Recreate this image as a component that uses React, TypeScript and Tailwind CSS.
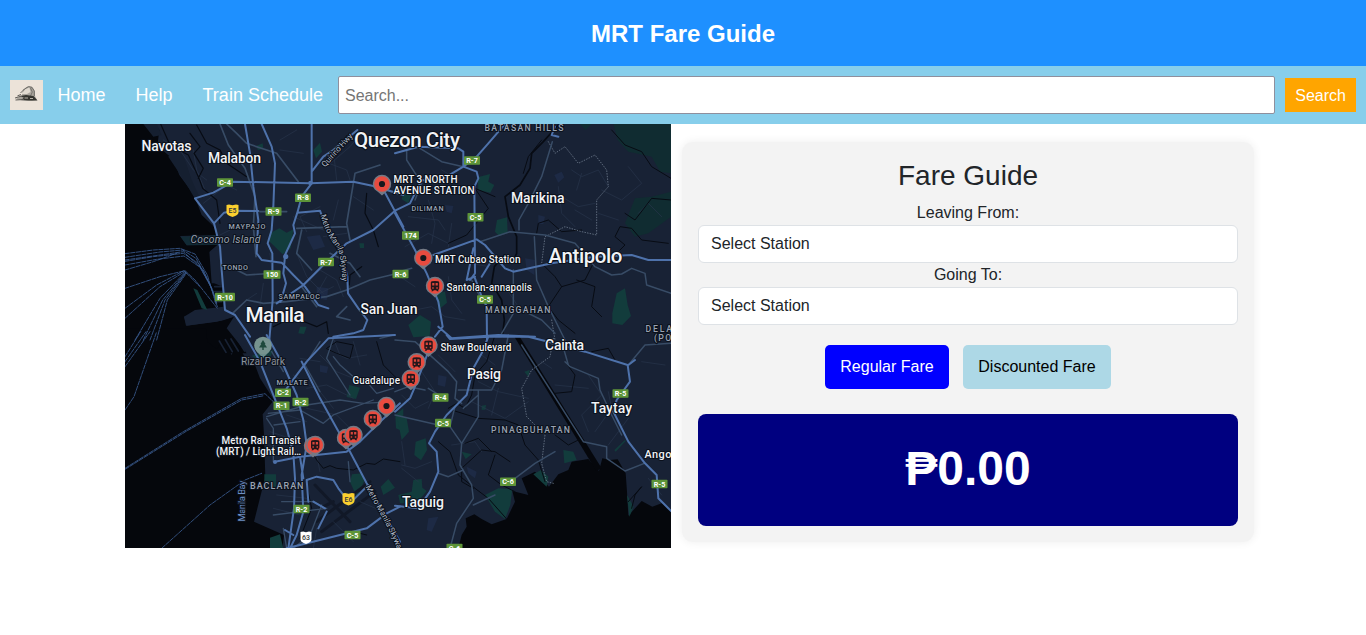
import React from 'react';

type Label = { t: string; x: number; y: number; w: number; s: number; c?: string; weight?: number; italic?: boolean; rot?: number };

const BRIGHT = '#f1f3f6';
const DIM = '#9aa3b2';

const labels: Label[] = [
  { t: 'Navotas', x: 141.5, y: 151.3, w: 50, s: 14 },
  { t: 'Malabon', x: 208, y: 163.2, w: 53, s: 14 },
  { t: 'Quezon City', x: 354, y: 147.3, w: 106, s: 20.5 },
  { t: 'Marikina', x: 511, y: 203, w: 53.5, s: 14 },
  { t: 'Antipolo', x: 548.5, y: 263, w: 74, s: 20.5 },
  { t: 'Manila', x: 245.5, y: 322, w: 59, s: 20.8 },
  { t: 'San Juan', x: 360.5, y: 314, w: 57, s: 14 },
  { t: 'Cainta', x: 545, y: 350, w: 39, s: 14 },
  { t: 'Pasig', x: 467, y: 379, w: 34, s: 14 },
  { t: 'Taytay', x: 591, y: 413, w: 41, s: 14 },
  { t: 'Taguig', x: 402, y: 507, w: 42, s: 14 },
  { t: 'Angono', x: 644.5, y: 458, w: 40, s: 11 },
  { t: 'MRT 3 NORTH', x: 393.5, y: 183.2, w: 64, s: 10 },
  { t: 'AVENUE STATION', x: 393.5, y: 194, w: 81, s: 10 },
  { t: 'MRT Cubao Station', x: 435, y: 263.2, w: 85.5, s: 10 },
  { t: 'Santolan-annapolis', x: 446.5, y: 290.8, w: 85.5, s: 10 },
  { t: 'Shaw Boulevard', x: 440.5, y: 350.5, w: 71, s: 10 },
  { t: 'Guadalupe', x: 352.5, y: 383.5, w: 47.5, s: 10 },
  { t: 'Metro Rail Transit', x: 221.5, y: 444, w: 79, s: 10 },
  { t: '(MRT) / Light Rail…', x: 216, y: 455, w: 85, s: 10 },
  { t: 'BATASAN HILLS', x: 484.5, y: 131, w: 79, s: 8.7, c: DIM },
  { t: 'DILIMAN', x: 411.5, y: 211, w: 32, s: 7.2, c: DIM },
  { t: 'MAYPAJO', x: 228.5, y: 229, w: 37, s: 7.2, c: DIM },
  { t: 'TONDO', x: 222.5, y: 269.5, w: 25.5, s: 7.2, c: DIM },
  { t: 'SAMPALOC', x: 278.5, y: 299.3, w: 41.5, s: 7.2, c: DIM },
  { t: 'MANGGAHAN', x: 485, y: 313, w: 65.5, s: 8.7, c: DIM },
  { t: 'DELA PAZ', x: 645.5, y: 331.5, w: 52, s: 8.7, c: DIM },
  { t: '(POB.)', x: 654, y: 341, w: 32, s: 8.7, c: DIM },
  { t: 'MALATE', x: 276.5, y: 384.7, w: 31, s: 7.2, c: DIM },
  { t: 'PINAGBUHATAN', x: 491, y: 432.7, w: 79, s: 8.7, c: DIM },
  { t: 'BACLARAN', x: 250, y: 489, w: 53.5, s: 9, c: DIM },
  { t: 'Cocomo Island', x: 190.5, y: 242.7, w: 70, s: 10.5, c: '#98a1ae', weight: 400, italic: true },
  { t: 'Rizal Park', x: 241, y: 365.3, w: 44, s: 10.5, c: '#8b929c', weight: 400 },
  { t: 'Manila Bay', x: 245, y: 521.5, w: 41, s: 9.5, c: '#6f8fc4', weight: 400, rot: -90 },
  { t: 'Quirino Hwy', x: 325, y: 167.5, w: 42, s: 8.2, c: '#b4bdca', weight: 400, rot: -48 },
];

const shields: [string, number, number, number][] = [
  ['C-4', 225, 182.5, 16], ['R-9', 273.5, 211.5, 16], ['R-8', 303, 197.7, 16], ['R-7', 326, 262, 16],
  ['150', 272, 274.5, 17], ['R-10', 225, 297, 20], ['R-7', 472, 160.5, 16], ['C-5', 475.5, 217.3, 16],
  ['174', 410.5, 235.5, 17], ['R-6', 400.5, 274, 16], ['C-5', 485, 299.5, 16], ['C-2', 283, 392.7, 16],
  ['R-1', 281.5, 405.7, 16], ['R-2', 300.5, 402, 16], ['R-2', 301.5, 509, 16], ['C-5', 352.5, 535, 16],
  ['R-4', 440.5, 397.5, 16], ['C-5', 443, 423, 16], ['R-5', 620.5, 393.5, 16], ['R-5', 659.5, 484, 16],
  ['C-6', 508, 481.8, 16], ['C-6', 454.5, 548, 16],
];

const pins: [number, number, 'dot' | 'train'][] = [
  [382, 184, 'dot'], [423.3, 258, 'dot'], [435, 286, 'train'], [428.5, 345.5, 'train'], [416.7, 362.3, 'train'],
  [410.8, 378.8, 'train'], [386.5, 406, 'dot'], [372.8, 419, 'train'], [346, 438, 'train'], [353.5, 435, 'train'],
  [313, 446, 'dot'], [315.2, 445, 'train'],
];

function Pin({ x, y, kind }: { x: number; y: number; kind: 'dot' | 'train' }) {
  return (
    <g transform={`translate(${x} ${y})`}>
      <path d="M-7.2 5.6 A9.2 9.2 0 1 1 7.2 5.6 Q3.5 8.2 0 11.5 Q-3.5 8.2 -7.2 5.6Z" fill="#747985" />
      <circle r="7.8" fill="#e84b3f" />
      {kind === 'dot' ? (
        <circle r="3.1" fill="#16181d" />
      ) : (
        <g fill="#24161a">
          <path d="M-4.2 -3.6 Q-4.2 -5 0 -5 Q4.2 -5 4.2 -3.6 V2.6 Q4.2 4 2.9 4 L3.8 5.2 H2 L1.2 4.2 H-1.2 L-2 5.2 H-3.8 L-2.9 4 Q-4.2 4 -4.2 2.6Z" />
          <path d="M-2.8 -3 H-.6 V-.6 H-2.8Z M.6 -3 H2.8 V-.6 H.6Z M-2.8 1.3 H-1.3 V2.7 H-2.8Z M1.3 1.3 H2.8 V2.7 H1.3Z" fill="#d8463b" />
        </g>
      )}
    </g>
  );
}

/* Each map tile is drafted at three units per pixel. */
const NW = 'translate(120 120) scale(.33333)';
const NE = 'translate(395 120) scale(.33333)';
const SW = 'translate(120 335) scale(.33333)';
const SE = 'translate(395 335) scale(.33333)';

function StationMap() {
  return (
    <svg viewBox="125 124 546 424" className="block h-[424px] w-[546px] shrink-0" fill="none" strokeLinejoin="round" strokeLinecap="round">
      <rect x="125" y="124" width="546" height="424" fill="#182235" />

      {/* water */}
      <g fill="#05070c">
        <path transform={NW} d="M0 0H95L118 30L112 78L160 118L178 165L222 225L245 285L280 318L294 345L180 348L200 376L292 375L270 394L283 490L308 500L310 568L250 578L192 590L198 617L305 602L342 590L320 625L380 700H0Z" />
        <path transform={SW} d="M0 -20H258L262 20L290 42L310 15L335 60L350 22L372 62L398 72L420 130L462 195L428 238L432 300L436 425L402 560L492 600L485 660H0Z" />
        <path transform={SE} d="M185 660L200 600L215 575L212 550L238 538L260 552L290 568L335 552L360 500L352 468L400 480L380 430L420 410L462 455L490 418L520 405L530 380L580 372L612 408L622 370L645 375L668 373L692 415L696 470L700 542L740 498L772 515L800 505L840 530V660Z" />
        <path transform={SE} d="M358 5L374 5L620 400L604 408Z" />
      </g>
      <path transform={NW} fill="#151f30" d="M70 12L100 50L125 45L110 12ZM145 110L158 85L190 105L215 180L240 235L222 232L195 185Z" />
      <path transform={NW} fill="#182235" d="M268 395L295 390L300 490L275 490ZM225 570L310 560L340 590L290 605L200 617L192 590Z" />
      <path transform={NW} fill="#112a35" d="M182 350L295 346L298 374L200 376Z" />
      <g stroke="#182235" strokeWidth="5">
        <path transform={SW} d="M298 18L318 52M316 14L337 50M333 12L355 48M350 10L374 48" />
        <path transform={NW} d="M284 500H305M284 515H305M284 530H305M284 545H305" />
      </g>

      {/* parks */}
      <g fill="#123c3c">
        <path transform={NW} d="M450 340L478 325L500 338L520 328L512 385L488 403L446 362ZM580 90L600 68L606 95L588 115ZM408 78L428 70L430 86L414 90ZM718 370L732 370L732 384L720 384ZM220 505L232 510L262 570L245 565ZM540 620L560 620L552 642L535 640Z" />
        <path transform={NE} d="M248 172L285 162L280 185L298 195L286 218L250 210ZM306 300L336 292L338 340L312 348L300 335ZM25 215L48 225L40 250L20 238ZM652 580L665 520L690 505L698 555L708 588L682 615L652 610ZM40 615L75 585L108 605L104 648L55 652ZM125 520L150 515L156 548L130 570Z" />
        <path transform={SW} d="M688 150L720 158L708 192L680 186ZM696 418L728 415L732 440L710 485L690 440ZM782 455L805 432L825 458L790 480ZM450 608L480 598L490 640H450ZM433 418H468V455H433ZM395 62L460 45L450 68L405 70ZM826 240L850 220V290L828 280Z" />
        <path transform={SE} d="M62 320L92 310L96 345L78 376L58 360ZM10 480L50 470L55 435L80 432L82 458L95 468L65 505L15 505ZM270 480L310 460L352 462L346 510L330 552L300 530ZM415 418L438 405L460 425L455 455ZM505 345L535 350L545 375L508 385ZM200 350L230 358L212 372ZM388 110L404 105L400 125ZM696 480L716 515L703 545ZM260 212L273 210L271 224L260 224ZM658 345L690 315L692 318L662 350ZM5 240L35 250L42 290L20 315Z" />
      </g>
      <path transform={NE} fill="#102c31" d="M655 12H828V160L795 155L770 110L700 95L668 60ZM720 235L770 230L828 215V290L760 340L720 350L690 310ZM555 12L590 12L572 30Z" />
      <g fill="#1d2a45">
        <path transform={NE} d="M478 165L500 155L508 172L490 188ZM150 255L175 258L170 280L155 275ZM430 285L450 290L445 312L430 312ZM390 415L420 420L418 465L395 450Z" />
        <path transform={SE} d="M130 120L155 125L150 155L128 150ZM100 550L130 545L110 590L95 585ZM215 395L245 410L240 430L220 415Z" />
        <path transform={NW} d="M560 350L600 345L615 380L580 390ZM590 500L625 505L620 540L590 535Z" />
        <path transform={SW} d="M600 90L625 95L620 115L600 110Z" />
      </g>

      {/* airport */}
      <g stroke="#111827" strokeWidth="9">
        <path transform={SW} d="M590 560L750 440M605 590L765 470M585 450L690 560M600 520L640 500" />
      </g>

      {/* local streets */}
      <g stroke="#27354b" strokeWidth="2">
        <path transform={NW} d="M130 60L180 90L220 150L260 180M220 90L230 150L255 210M250 250L320 195L350 210M340 300L330 330L300 345M395 310L440 320M520 290L610 330M560 335L540 290L600 260M610 350L680 340M600 120L680 150L690 180M640 90L650 180M720 45L690 80L620 140M530 400L560 470L610 520M550 500L600 450L650 480L670 530M580 540L620 470M500 520L560 540L640 500M430 490L420 560M380 540L410 520M450 400L455 450M700 230L760 270M640 300L655 240M530 30L480 60M480 90L550 100" />
        <path transform={NE} d="M40 290L130 300L150 330M30 380L100 340L160 370M60 255L130 270M140 150L190 180M100 240L120 310L110 370M170 310L160 380M180 420L230 430L280 440M500 230L550 260L600 250M490 200L500 280L540 320M530 150L560 170L610 150L640 200M540 270L590 300M560 160L545 210M620 210L680 240L740 190L700 140M730 280L760 250L800 290M610 280L670 300M160 470L170 540L200 580M60 570L110 560L150 590L210 600M0 460L60 500M330 500L370 560" />
        <path transform={SW} d="M620 40L680 70L740 60M600 60L650 110L700 130M640 10L660 60M700 20L720 90M520 120L600 170L640 220M560 160L620 150L700 190M560 220L650 240L700 290M500 240L560 260M450 290L540 320M590 360L600 410M470 480L560 490M460 520L540 540M590 580L580 640M640 560L700 620M720 500L790 530M430 60L500 110M540 70L600 80" />
        <path transform={SE} d="M60 80L120 170L100 220M20 180L60 220L100 200M20 390L60 400L110 380M20 320L30 390M70 440L20 400M130 60L180 110M250 140L310 170L400 190M230 200L330 250L400 200M310 160L290 240M260 60L300 90M580 120L620 180L560 240L580 290M640 330L700 250M440 80L470 100M480 150L580 160M600 290L650 220L640 170M760 430L800 480M170 330L240 320L260 350M740 80L810 90" />
      </g>

      {/* rivers and district edges */}
      <g stroke="#070b13" strokeWidth="5">
        <path transform={NW} d="M122 12L150 75L205 105L235 170L248 205L290 240L300 310M210 40L240 80L222 100L250 145L235 175M230 15L260 70L300 90L320 130L380 170M725 440L690 465L688 495M460 620L500 600L540 600L590 620L620 605L625 640M775 380L760 330L735 280L740 220" strokeWidth="3.5" />
        <path transform={NE} d="M490 15L445 65L410 100L405 145L375 195L330 230L340 290L365 350L365 400L350 430L328 405L298 440L290 490L320 540L328 600L322 650" />
        <path transform={NE} d="M440 60L400 110L385 160M560 330L500 335L460 300L430 310L425 340M440 430L480 470L500 500L570 480L600 420L640 410M500 500L460 560L490 600L540 640M545 480L600 500L590 560L620 590M650 30L690 75L740 95L770 140L828 175M665 400L690 375L660 350L675 320L710 325L740 360L820 370M300 230L240 205L280 265L215 345L160 370M690 280L720 300L770 235L828 240" strokeWidth="3" />
        <path transform={SE} d="M300 0L275 80L240 120L230 180L210 220L185 205L160 220M170 225L250 250L330 255L370 270L390 330L430 375L450 440M300 360L280 420L320 450L360 470M130 320L165 350L190 420L240 460L280 490L335 552M480 300L520 330L560 310M590 50L640 40L660 75M510 80L540 120L530 170L480 175M210 325L250 310L290 350M345 380L300 350L260 345L200 400L200 440L235 460M710 520L720 480L740 455L700 500" strokeWidth="3" />
        <path transform={SW} d="M570 340L590 375L610 400L630 392L650 400L700 405L740 385L765 388L790 372L840 380M620 40L650 20L700 30L690 70L650 55ZM740 600L700 590L660 600M540 610L575 520L560 450M770 20L790 90L830 130" strokeWidth="3" />
      </g>
      <g stroke="#6d7b8d" strokeWidth="2.5" strokeDasharray="2 6">
        <path transform={NE} d="M460 65L480 100L510 80L550 130L600 105L635 150L640 200L605 240L605 345L560 335L510 320L450 350L440 430M470 600L480 660" />
        <path transform={SE} d="M475 10L465 65L410 105L380 160L395 245L450 300L440 385L455 440L475 445" />
      </g>

      {/* ferry routes */}
      <g stroke="#3c5f97" strokeWidth="2.4" strokeDasharray="13 4">
        <path transform={NW} d="M15 401L100 390L180 385L225 402L262 465L288 552M15 412L120 396L188 390L228 415L270 492L292 560M15 424L100 410L190 400L235 430L278 510L290 550M15 435L110 418L192 408L240 442L275 505M15 420L190 395L250 450L285 530M15 505L120 470L195 452L225 480L292 565M15 565L110 495L192 452L240 500M15 595L120 500L194 455M45 660L120 535L196 456M70 660L128 540L197 457M90 660L135 540L198 458M110 660L142 540L199 460M15 450L100 425L170 400" />
        <path transform={SW} d="M15 65L62 -10M15 80L78 -10M15 95L90 -10M15 225L42 185L110 -10M15 400L190 290L365 190L435 176L460 200M15 403L200 288L365 195L432 182M125 640L270 510L375 435L425 415" />
      </g>

      {/* secondary roads */}
      <g stroke="#384c66">
        <path transform={NW} d="M300 12L325 75L375 145L405 230L400 320L408 410M320 12L350 40L380 70L470 100L535 185M530 325L680 320M690 360L680 310L705 160L780 135M545 330L530 400L575 450M380 540L340 578M380 540L430 550L500 545L620 530L680 510L750 480L825 462M340 445L380 465L455 460M420 275L500 275M630 400L690 430L720 470M680 560L650 590L690 600M545 500L590 560" strokeWidth="5" />
        <path transform={NE} d="M472 65L440 170L400 250L372 300L372 330M255 365L345 335L450 345L540 370L600 440L650 465L680 462L710 445L750 460L755 495L828 520M418 350L425 480L460 560L510 660M355 450L355 580L320 640M35 90V120L80 190L60 240M75 85L140 125L205 140M360 560L440 600L480 640M-5 460L50 445M230 480L255 530L278 560" strokeWidth="4.5" />
        <path transform={SE} d="M0 15L60 20L160 110L185 140L180 190L200 205M190 165H290L320 105L340 0M250 165V245L200 325L165 275L180 215M200 325L195 390L230 450L235 490L185 565L165 640M130 415L160 425L205 405M100 160L140 185M0 240L130 270M510 80L525 95L610 130L615 165L650 240L680 300M380 30L565 320L635 335V370L690 408L748 385M0 170L40 155L90 165M205 220L250 180M700 90L750 30L828 25M360 430L420 385L480 350M235 510L300 480M500 20L520 90" strokeWidth="4.5" />
        <path transform={SW} d="M440 245L560 210L660 195L730 205L820 200M445 235L540 225L610 265L640 240L760 195M440 250L460 280L460 380M462 270L540 260M640 65L660 90L700 125L740 140L770 175L820 160M640 10L620 70L690 180M490 580L500 640M460 540L620 520M485 500L580 500L615 520M605 510L570 600L520 640M685 380L690 440M820 0L780 10M600 20L555 90L600 170M455 50L490 110" strokeWidth="4" />
      </g>

      {/* highways */}
      <g stroke="#4e72ab" strokeWidth="6">
        <path transform={NW} d="M375 12L390 100L400 200L415 300L410 400L425 420L485 428L520 465L555 500L595 555L625 565M425 12L455 80L465 130L460 260L455 330L443 370L457 400L458 540L448 660M575 12L575 190L545 230L532 278L600 272L610 300L640 350L668 410L682 470L684 520L715 565L742 600L730 630L700 640L640 650M575 155L610 110L640 90L712 30M225 235L280 218L340 185L570 190L700 185L760 198L850 225M225 235L282 310L300 380L305 450L315 570L345 585L390 650M282 310L312 278L340 272L415 273M532 278L520 315L525 340L495 405M470 550L550 495L610 435L680 370L760 330L825 272M495 410L490 460L498 490L482 545M780 190L812 250L850 320" />
        <path transform={NE} d="M0 272L45 250L80 180L130 185L205 140L245 155L250 175L238 200L240 460L225 480M0 100L70 80L190 85L205 95V140M330 12L280 70L245 110L205 140M115 405L245 358L270 375L330 445L355 455L470 430L600 410L710 405L760 420L828 420M215 480L235 385M215 480L240 470M0 280L60 390L95 460L130 545L143 620L120 650M240 475L260 530L275 560L276 660M130 620L170 655L310 645L420 650M480 20L470 45L490 50M285 430L260 470" />
        <path transform={SE} d="M155 0L165 12L280 5L400 5L460 20L570 50L698 90L705 140L665 195L655 230L700 320L750 385L785 420L790 490L830 530M280 5L260 55L235 100L215 180L155 240L120 290L102 325L125 350L130 410L105 470L70 520L0 512M60 155L45 190L0 230M120 15L100 50L60 155M700 90L720 75" />
        <path transform={SW} d="M375 0L420 80L440 130L470 205L500 280L520 355L525 430L522 520L505 640M440 0L490 90L530 180L550 255L560 330L545 420L550 530L530 600L510 640M545 80L600 190L650 280L690 350L740 445L800 550L840 620M465 380L540 365L680 350L720 320L770 270L840 205M500 160L560 80L625 10L720 5L825 0M565 500L560 435L590 425L640 435L655 460L690 505L710 485L745 450M580 500L615 520M620 530L595 580M500 640L660 600L740 580L800 535L840 515M495 585L520 600M540 365L550 430" />
      </g>
      <g fill="#4e72ab">
        <circle cx="310.5" cy="183" r="2.3" /><circle cx="275" cy="462" r="2" /><circle cx="285.7" cy="256.5" r="2.6" />
      </g>

      {/* park marker */}
      <path d="M257 352L263 358L269 352Z" fill="#6b8c8b" />
      <circle cx="263" cy="345.5" r="8.8" fill="#76938f" />
      <path d="M263 340L265.5 344H264.7L267 347.5H263.7V350H262.3V347.5H259L261.3 344H260.5Z" fill="#1e493c" />

      {/* route shields */}
      {shields.map(([t, x, y, w], i) => (
        <g key={i}>
          <rect x={x - w / 2} y={y - 4.3} width={w} height="8.6" rx=".8" fill="#5d9438" />
          <text x={x} y={y + 2.5} textAnchor="middle" fontSize="7.2" fontWeight="700" fill="#fff" className="font-['Roboto',sans-serif]">{t}</text>
        </g>
      ))}
      <path d="M226.5 205L229 204.5L232.5 205.2L236 204.5L238.5 205V212.5Q238.5 215 232.5 217Q226.5 215 226.5 212.5Z" fill="#fbd02f" />
      <path d="M342.5 493.5L345 493L348.5 493.7L352 493L354.5 493.5V501Q354.5 503.5 348.5 505.5Q342.5 503.5 342.5 501Z" fill="#fbd02f" />
      <path d="M300.5 532L303 531.5L306 532.2L309 531.5L311.5 532V539.5Q311.5 542 306 544Q300.5 542 300.5 539.5Z" fill="#fff" />
      <g fontSize="7" fontWeight="500" fill="#33363b" textAnchor="middle" className="font-['Roboto',sans-serif]">
        <text x="232.5" y="213.3">E5</text><text x="348.5" y="501.8">E6</text><text x="306" y="540.3">63</text>
      </g>

      {pins.map(([x, y, kind], i) => <Pin key={i} x={x} y={y} kind={kind} />)}

      {/* place names */}
      <g stroke="#0b111c" strokeWidth="2.2" paintOrder="stroke" className="font-['Roboto',sans-serif]">
        {labels.map((l) => (
          <text
            key={l.t}
            x={l.x}
            y={l.y}
            fontSize={l.s}
            textLength={l.w}
            fontWeight={l.weight ?? 500}
            fontStyle={l.italic ? 'italic' : 'normal'}
            fill={l.c ?? BRIGHT}
            transform={l.rot ? `rotate(${l.rot} ${l.x} ${l.y})` : undefined}
          >
            {l.t}
          </text>
        ))}
        <path id="skyway-north" stroke="none" d="M320.5 215C325 232 332 242 337 248C341 256 342 268 342.5 290" />
        <path id="skyway-south" stroke="none" d="M365.5 487C374 504 386 520 400 556" />
        <g fontSize="8" fill="#b4bdca">
          <text letterSpacing="-.25"><textPath href="#skyway-north">Metro Manila Skyway</textPath></text>
          <text letterSpacing="-.1"><textPath href="#skyway-south">Metro Manila Skyway</textPath></text>
        </g>
      </g>
    </svg>
  );
}

function TrainLogo() {
  return (
    <svg viewBox="0 0 33 30" className="h-[30px] w-[33px] shrink-0 bg-[#ece3d9]" fill="none">
      <path d="M6 19L12 15L13 9.5L18 6.5L22 7L24.5 11L25 16L27 20L22 21L12 20.5Z" fill="#a9a49c" />
      <path d="M11.5 14L15.5 9L19.5 7.5L20.5 12L17 14Z" fill="#e0d9cf" />
      <path d="M10.5 13L14.5 9L18.5 6.6L22 7.3L24.3 11V16" stroke="#6b6964" />
      <path d="M20.5 8L22.3 12L20.5 16" stroke="#77746e" />
      <path d="M10 16L16 15L23.5 16L27.5 20.5H18L11 20L14 17.7Z" fill="#34342f" />
      <path d="M5 18L11 16.2M5.5 20L14 19.5M7.5 15.8L11 14.5" stroke="#5c5a56" />
      <path d="M14.5 18H18M20 18.5H23" stroke="#bab4aa" />
    </svg>
  );
}

function StationSelect({ label }: { label: string }) {
  return (
    <>
      <label className="text-center text-base leading-6">{label}</label>
      <div className="flex h-[38px] items-center rounded-md border border-[#dee2e6] bg-white px-3 text-base">Select Station</div>
    </>
  );
}

export default function App() {
  return (
    <div className="min-h-[635px] bg-white font-['Liberation_Sans',Arial,sans-serif] text-[#212529]">
      <header className="flex h-[66px] items-center justify-center bg-[#1e90ff] pt-[2px]">
        <h1 className="text-2xl font-bold text-white">MRT Fare Guide</h1>
      </header>
      <nav className="flex h-[58px] items-center bg-[#87ceeb] px-[10px]">
        <TrainLogo />
        <div className="-ml-[0.5px] flex text-lg text-white">
          <a className="px-[15px]">Home</a>
          <a className="px-[15px]">Help</a>
          <a className="px-[15px]">Train Schedule</a>
        </div>
        <input
          placeholder="Search..."
          className="mr-[10px] h-[38px] min-w-0 flex-1 rounded-[2px] border border-[#8f8f9d] bg-white px-[6px] pt-[2px] text-base placeholder:text-[#757575]"
        />
        <button className="h-[34px] bg-[#ffa500] px-[10px] pt-[2px] text-base text-white">Search</button>
      </nav>
      <main className="flex items-start gap-[11px] pl-[125px]">
        <StationMap />
        <section className="mt-[18px] flex w-[572px] flex-col rounded-[11px] bg-[#f3f3f3] p-4 shadow-[0_0_10px_rgba(0,0,0,0.07)]">
          <h2 className="mb-[7px] pt-px text-center text-[28px] leading-[34px]">Fare Guide</h2>
          <div className="mt-px flex flex-col">
            <StationSelect label="Leaving From:" />
            <StationSelect label="Going To:" />
          </div>
          <div className="mt-5 flex justify-center gap-[14px]">
            <button className="h-11 w-[124px] rounded-[5px] bg-[#0000ff] text-base text-white">Regular Fare</button>
            <button className="h-11 w-[148px] rounded-[5px] bg-[#add8e6] text-base text-black">Discounted Fare</button>
          </div>
          <div className="mt-[25px] flex h-28 items-center justify-center rounded-lg bg-[#000080] pb-[2px] text-5xl font-bold text-white">₱0.00</div>
        </section>
      </main>
    </div>
  );
}
